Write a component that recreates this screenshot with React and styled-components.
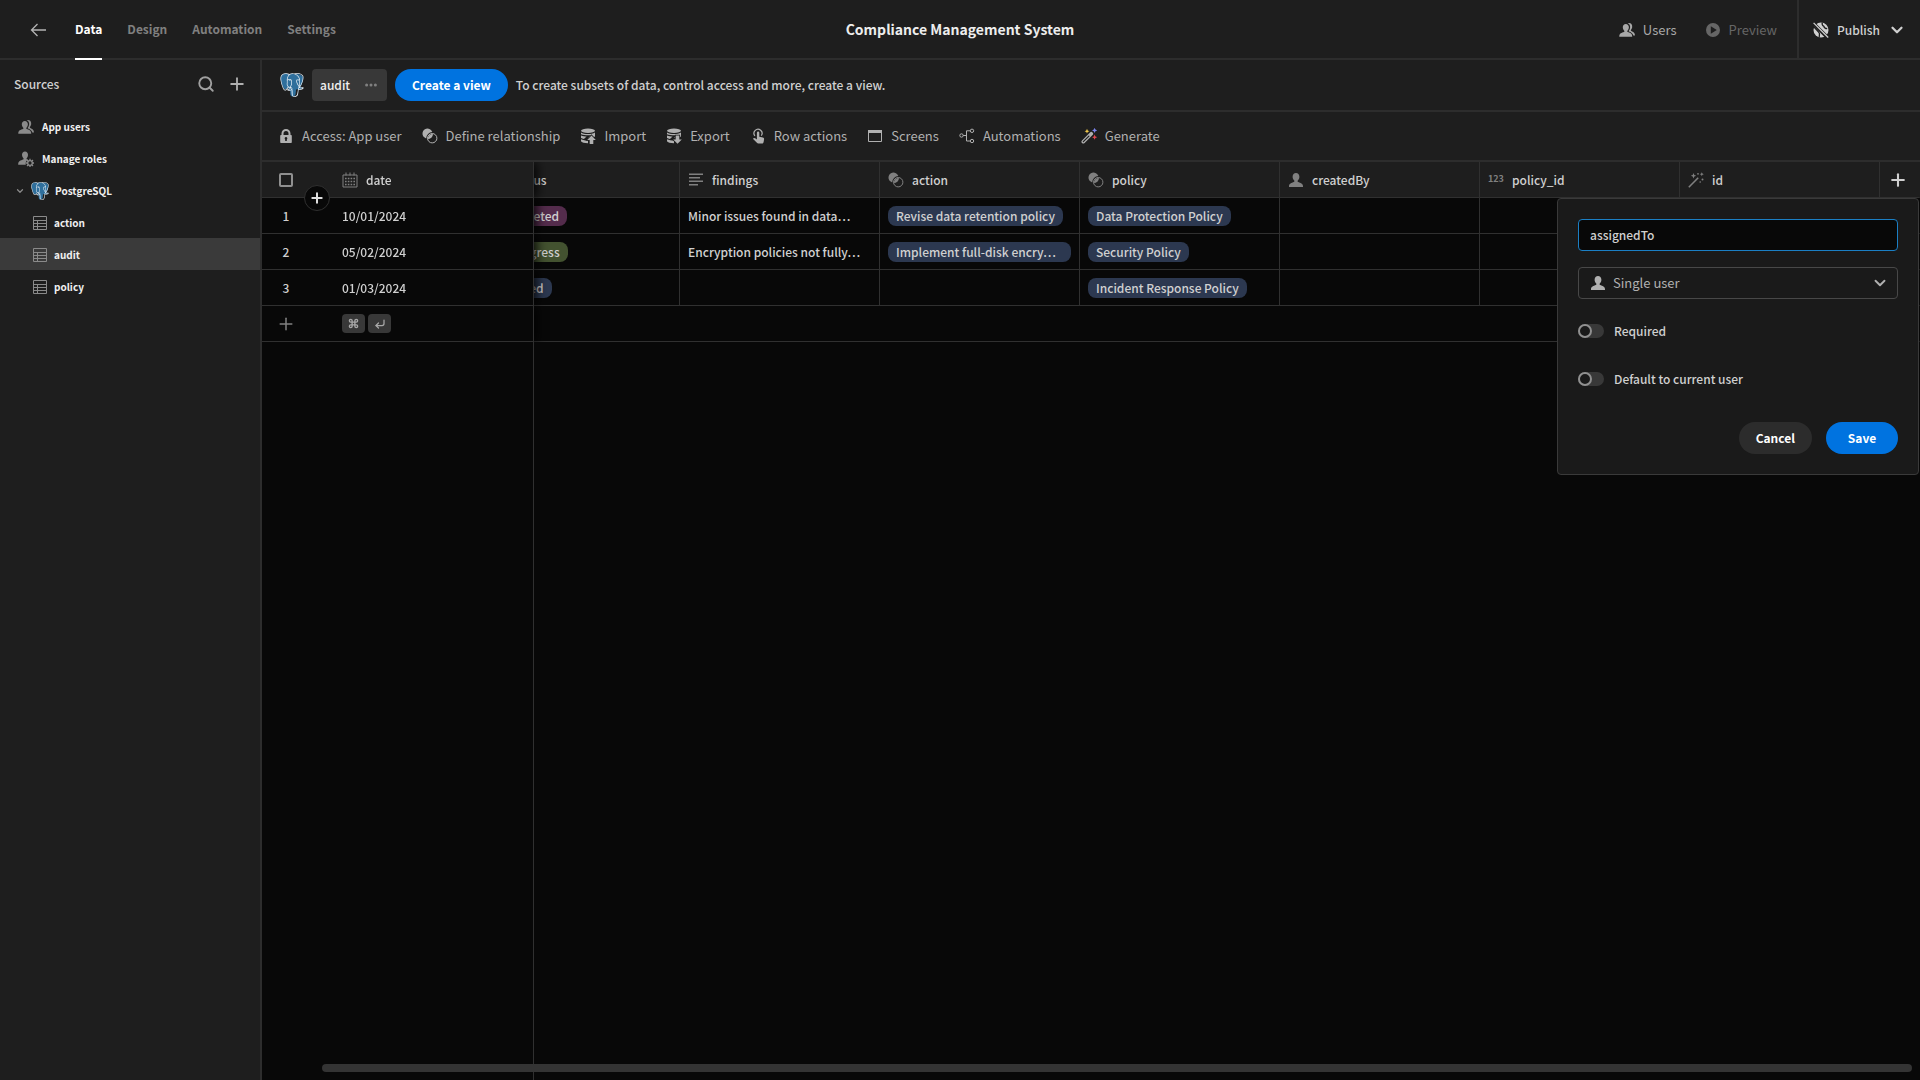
import React, { useLayoutEffect, useRef, useState } from "react";
import styled, { createGlobalStyle } from "styled-components";
import { SiPostgresql } from "react-icons/si";
import {
	ChevronDown,
	Command,
	CornerDownLeft,
	Plus,
	Search
} from "lucide-react";

const GlobalStyle = createGlobalStyle`
	*, *::before {
		box-sizing: border-box;
	}
	body {
		margin: 0;
		background: #080808;
		color: #d0d0d0;
		font-family: "Noto Sans CJK SC", "Noto Sans", sans-serif;
		font-size: 12px;
		line-height: 20px;
		overflow: hidden;
	}
	button, input, select {
		font: inherit;
		color: inherit;
	}
	button {
		background: none;
		border: none;
		padding: 0;
		cursor: pointer;
	}
	svg {
		flex: none;
		display: block;
	}
`;

const SCApp = styled.div`
	display: flex;
	flex-direction: column;
	height: 100vh;
`;

const SCTopBar = styled.header`
	display: grid;
	grid-template-columns: 1fr auto 1fr;
	height: 60px;
	background: #1e1e1e;
	border-bottom: 2px solid #2d2d2d;
`;

const SCTabs = styled.nav`
	display: flex;
	align-items: stretch;
	gap: 25px;
	padding-left: 30px;
`;

const SCBack = styled.button`
	margin-right: 3px;
	color: #b4b4b4;
`;

const SCTab = styled.a`
	display: flex;
	align-items: center;
	height: 60px;
	color: ${props => (props.$active ? "#ffffff" : "#808080")};
	border-bottom: 2px solid
		${props => (props.$active ? "#ffffff" : "transparent")};
	font-weight: 700;
	text-decoration: none;
`;

const SCTitle = styled.h1`
	margin: 0;
	padding-bottom: 2px;
	align-self: center;
	color: #ededed;
	font-size: 14px;
	font-weight: 700;
`;

const SCTopActions = styled.div`
	display: flex;
	justify-content: flex-end;
`;

const SCTopButton = styled.button`
	display: flex;
	align-items: center;
	gap: 8px;
	margin-right: 28px;
	color: #a8a8a8;
	font-size: 13px;

	&:disabled {
		margin-right: 20px;
		color: #666666;
	}
`;

const SCPublish = styled.button`
	display: flex;
	align-items: center;
	gap: 8px;
	padding: 0 14px;
	border-left: 2px solid #2d2d2d;
	color: #d0d0d0;
	font-weight: 500;
`;

const SCBody = styled.div`
	display: flex;
	flex: 1;
	min-height: 0;
`;

const SCSidebar = styled.aside`
	width: 262px;
	flex: none;
	background: #1e1e1e;
	border-right: 2px solid #2d2d2d;
`;

const SCSidebarHeader = styled.div`
	display: flex;
	align-items: center;
	gap: 12px;
	height: 50px;
	padding: 0 13px 2px 14px;
	color: #d0d0d0;
`;

const SCSidebarTitle = styled.h2`
	flex: 1;
	margin: 0;
	font-size: 12px;
	font-weight: 500;
`;

const SCSourceList = styled.ul`
	margin: 0;
	padding: 0;
	list-style: none;
`;

const SCSource = styled.a`
	display: flex;
	align-items: center;
	gap: ${props => (props.$nested ? 6 : 8)}px;
	height: 32px;
	padding-top: 1px;
	padding-left: ${props => props.$indent}px;
	background: ${props => (props.$active ? "#3a3a3a" : "transparent")};
	color: #f0f0f0;
	font-size: 10px;
	font-weight: 700;
	text-decoration: none;

	svg {
		color: #8a8a8a;
	}
`;

const SCMain = styled.main`
	display: flex;
	flex-direction: column;
	flex: 1;
	min-width: 0;
`;

const SCViewBar = styled.div`
	display: flex;
	align-items: center;
	gap: 8px;
	height: 52px;
	padding-left: 18px;
	background: #1e1e1e;
	border-bottom: 2px solid #2d2d2d;
	font-weight: 500;
`;

const SCViewPill = styled.button`
	display: flex;
	align-items: center;
	justify-content: space-between;
	width: 75px;
	height: 32px;
	padding: 0 10px 0 8px;
	border-radius: 4px;
	background: #383838;
	color: #f0f0f0;
	font-weight: 500;
`;

const SCButton = styled.button`
	min-width: 72px;
	height: 32px;
	padding: 0 17px;
	border-radius: 16px;
	background: ${props => (props.$primary ? "#0073e0" : "#2c2c2c")};
	color: #ffffff;
	font-weight: 700;
`;

const SCToolbar = styled.div`
	display: flex;
	align-items: center;
	gap: 20px;
	height: 50px;
	padding-left: 16px;
	background: #1e1e1e;
	border-bottom: 2px solid #2d2d2d;
`;

const SCTool = styled.button`
	display: flex;
	align-items: center;
	gap: 8px;
	color: #b0b0b0;
	font-size: 13px;
`;

const SCGrid = styled.div`
	position: relative;
	flex: 1;
	min-height: 0;
`;

const SCScroller = styled.div`
	display: flex;
	flex-direction: column;
	height: 100%;
	overflow-x: auto;
	overflow-y: hidden;
	scrollbar-width: none;
`;

const SCTable = styled.table`
	flex: none;
	width: 1712px;
	min-width: calc(100% + 54px);
	table-layout: fixed;
	border-collapse: separate;
	border-spacing: 0;
	text-align: left;
`;

const SCHead = styled.th`
	height: 36px;
	padding: 0 8px;
	background: #1e1e1e;
	border-right: 1px solid ${props => (props.$plain ? "transparent" : "#303030")};
	border-bottom: 1px solid #303030;
	color: #d0d0d0;
	font-weight: 500;
`;

const SCHeadInner = styled.div`
	display: flex;
	align-items: center;
	gap: 8px;

	svg {
		color: #808080;
	}
`;

const SCAddColumn = styled.button`
	display: flex;
`;

const SCCell = styled.td`
	height: 36px;
	padding: 0 8px;
	background: #080808;
	border-right: 1px solid ${props => (props.$plain ? "transparent" : "#303030")};
	border-bottom: 1px solid #303030;
	font-weight: 500;
	white-space: nowrap;
	overflow: hidden;
`;

const SCGutterHead = styled(SCHead)`
	position: sticky;
	left: 0;
	z-index: 3;
	padding: 0;
	border-right: none;
`;

const SCGutterCell = styled(SCCell)`
	position: sticky;
	left: 0;
	z-index: 1;
	padding: 0;
	border-right: none;
`;

const SCGutterInner = styled.div`
	display: flex;
	justify-content: center;
	width: 48px;
	color: #d0d0d0;
`;

const SCPinnedHead = styled(SCHead)`
	position: sticky;
	left: 72px;
	z-index: 2;
	border-right-color: #303030;
	box-shadow: 2px 0 12px #000000;
	clip-path: inset(0 -20px 0 0);
`;

const SCPinnedCell = styled(SCCell)`
	position: sticky;
	left: 72px;
	z-index: 1;
	overflow: visible;
	border-right-color: #303030;
	box-shadow: 2px 0 12px #000000;
	clip-path: inset(0 -20px 0 0);
`;

const SCPinnedRest = styled.div`
	position: sticky;
	left: 0;
	flex: 1;
	width: 272px;
	border-right: 1px solid #303030;
`;

const SCCheckbox = styled.input`
	appearance: none;
	width: 14px;
	height: 14px;
	margin: 0;
	border: 2px solid #909090;
	border-radius: 2px;
`;

const SCInsertRow = styled.button`
	position: absolute;
	right: 4px;
	bottom: -14px;
	display: flex;
	align-items: center;
	justify-content: center;
	width: 26px;
	height: 26px;
	border: 1px solid #303030;
	border-radius: 50%;
	background: #080808;
	color: #e0e0e0;
`;

const SCBadge = styled.span`
	display: block;
	width: ${props => (props.$fill ? "100%" : "fit-content")};
	height: 20px;
	padding: 0 8px;
	border-radius: 8px;
	background: ${props => props.$color};
`;

const SCKeys = styled.div`
	display: flex;
	gap: 3px;
`;

const SCKey = styled.kbd`
	display: flex;
	align-items: center;
	justify-content: center;
	width: 23px;
	height: 19px;
	border-radius: 4px;
	background: #383838;
	color: #a8a8a8;
`;

const SCScrollThumb = styled.div`
	position: absolute;
	left: 60px;
	right: 8px;
	bottom: 8px;
	z-index: 4;
	height: 8px;
	border-radius: 4px;
	background: #343434;
`;

const SCPopover = styled.form`
	position: absolute;
	top: 36px;
	right: 1px;
	z-index: 5;
	display: flex;
	flex-direction: column;
	gap: 16px;
	width: 362px;
	padding: 20px;
	border: 1px solid #3a3a3a;
	border-radius: 4px;
	background: #1a1a1a;
	font-weight: 500;
`;

const SCInput = styled.input`
	height: 32px;
	padding: 0 11px 2px;
	border: 1px solid #1b7fc4;
	border-radius: 4px;
	outline: none;
	background: #080808;
	color: #d0d0d0;
`;

const SCSelectBox = styled.label`
	display: flex;
	align-items: center;
	gap: 7px;
	height: 32px;
	padding: 0 8px 0 11px;
	border: 1px solid #484848;
	border-radius: 4px;
	color: #b0b0b0;
	font-size: 13px;
	font-weight: 400;
`;

const SCSelect = styled.select`
	appearance: none;
	flex: 1;
	padding: 0;
	border: none;
	outline: none;
	background: transparent;
`;

const SCToggleRow = styled.label`
	display: flex;
	align-items: center;
	gap: 10px;
	height: 32px;
`;

const SCToggle = styled.input`
	appearance: none;
	width: 26px;
	height: 14px;
	margin: 0;
	border-radius: 7px;
	background: #383838;

	&::before {
		content: "";
		display: block;
		width: 14px;
		height: 14px;
		border: 2px solid #909090;
		border-radius: 50%;
		background: #1a1a1a;
	}

	&:checked::before {
		margin-left: 12px;
	}
`;

const SCFooter = styled.div`
	display: flex;
	justify-content: flex-end;
	gap: 14px;
	padding-top: 11px;
`;

const Icon = ({ children, size = 16 }) => (
	<svg width={size} height={size} viewBox="0 0 16 16" fill="currentColor">
		{children}
	</svg>
);

const PERSON =
	"M8 1c-2 0-3.4 1.6-3.4 3.8 0 1.7.8 3 1.6 3.8.3.4.3 1.2-.3 1.5C3.5 11 1 11.8 1 14.3v.7h14v-.7c0-2.5-2.5-3.3-4.9-4.2-.6-.3-.6-1.1-.3-1.5.8-.8 1.6-2.1 1.6-3.8C11.4 2.6 10 1 8 1z";

const BackIcon = () => (
	<svg width="17" height="14" viewBox="0 0 17 14" fill="none" stroke="currentColor" strokeWidth="1.3">
		<path d="M16 7H1.5M7.5 1l-6 6 6 6" />
	</svg>
);

const UserIcon = () => (
	<Icon>
		<path d={PERSON} />
	</Icon>
);

const UsersIcon = () => (
	<Icon>
		<path d="M6.8 2C5 2 3.8 3.4 3.8 5.3c0 1.5.7 2.7 1.4 3.4.3.4.3 1-.2 1.3C2.7 10.8.3 11.5.3 14v.8h12.9V14c0-2.5-2.3-3.2-4.5-4-.5-.3-.5-.9-.2-1.3.7-.7 1.4-1.9 1.4-3.4C9.9 3.4 8.6 2 6.8 2z" />
		<path d="M8.7 1c2.9-.6 4.8 1.1 4.5 4-.1 1.2-.6 2.2-1.2 2.8-.3.4-.2.9.3 1.2 1.9.8 3.7 2 3.7 4.4h-1.7c-.6-2.3-2.5-3.1-4.4-3.9-.3-.3-.2-.6 0-.9 1.9-2.4 1.8-6-1.2-7.6z" />
	</Icon>
);

const RolesIcon = () => (
	<Icon>
		<path d="M7 .5C5.2.5 4 1.9 4 3.8c0 1.5.7 2.7 1.4 3.4.3.4.3 1.1-.2 1.4C2.7 9.5.2 10.4.2 13v.8h7.6a5 5 0 0 1 2.3-5.3l-1.4-.3c-.3-.3-.2-.7 0-1C9.5 6.4 10 5.2 10 3.8 10 1.9 8.8.5 7 .5z" />
		<circle cx="12" cy="12" r="2.3" fill="none" stroke="currentColor" strokeWidth="1.3" />
		<path d="M12 7.8v1.9M12 14.3v1.9M7.8 12h1.9M14.3 12h1.9M9 9l1.4 1.4M13.6 13.6L15 15M15 9l-1.4 1.4M10.4 13.6L9 15" stroke="currentColor" strokeWidth="1.3" />
	</Icon>
);

const TableIcon = () => (
	<Icon>
		<path d="M1.5 1.5h13v13h-13zM1.5 5.5h13M1.5 8.5h13M1.5 11.5h13M5.5 5.5v9" fill="none" stroke="currentColor" />
	</Icon>
);

const LockIcon = () => (
	<Icon>
		<path fillRule="evenodd" d="M3 7h.5V5.5a4.5 4.5 0 0 1 9 0V7h.5a.8.8 0 0 1 .8.8v6.4a.8.8 0 0 1-.8.8H3a.8.8 0 0 1-.8-.8V7.8A.8.8 0 0 1 3 7zm2.500 0h5V5.500a2.500 2.500 0 0 0-5 0zM8 9a1.400 1.400 0 0 0-.8 2.500V13h1.600v-1.500A1.400 1.400 0 0 0 8 9z" />
	</Icon>
);

const RelationIcon = () => (
	<Icon>
		<path d="M10.3 4.1A5 5 0 1 0 4.2 10.4 6.5 6.5 0 0 1 10.3 4.1z" />
		<circle cx="10.2" cy="10.2" r="4.7" fill="none" stroke="currentColor" />
		<path d="M11 5.7A5.3 5.3 0 0 1 5.8 11 5.3 5.3 0 0 1 11 5.7z" />
	</Icon>
);

const DatabaseIcon = ({ up }) => (
	<Icon>
		<ellipse cx="8" cy="2.7" rx="7" ry="2.2" />
		<path d="M1 4.6c1.8 1.2 4.3 1.5 7 1.5s5.2-.3 7-1.5v3.8C13.2 9.5 10.7 9.8 8 9.8l3-2.6C7.5 7.5 3.5 7.2 1 6.3z" />
		<path d="M1 7.6c2 .9 3.8 1 5.6 1L3.9 10.9C2.7 10.7 1.7 10.4 1 9.9z" />
		<path d="M1 11.3c2 1 4.500 1.200 7 1.200v2.700c-3.600 0-6.400-.7-7-2z" />
		<g stroke="#1e1e1e" strokeWidth="1.6" paintOrder="stroke">
			{up ? (
				<path d="M11.500 7.500L15.800 12h-2.500v4H9.700v-4H7.200z" />
			) : (
				<path d="M9.700 7.500h3.600v4h2.500l-4.300 4.300-4.300-4.300h2.500z" />
			)}
		</g>
	</Icon>
);

const TapIcon = () => (
	<Icon>
		<path d="M4.9 7.8A4 4 0 1 1 11.3 7.6" fill="none" stroke="currentColor" strokeWidth="1.2" />
		<path d="M6.9 4.8a1.2 1.2 0 0 1 2.4 0v4l3.6.8c.9.2 1.3.8 1.2 1.7l-.5 2.7c-.1.8-.6 1.5-1.5 1.5H8.3c-.6 0-1-.2-1.4-.7L2.9 10.7c.7-1 1.9-.9 2.7-.2l1.3 1z" />
	</Icon>
);

const ScreenIcon = () => (
	<Icon>
		<path d="M1.5 2.5h13v11h-13z" fill="none" stroke="currentColor" />
		<path d="M1 2h14v3H1z" />
	</Icon>
);

const WorkflowIcon = () => (
	<Icon>
		<g fill="none" stroke="currentColor">
			<circle cx="2.5" cy="7.5" r="1.7" />
			<circle cx="13" cy="2.8" r="1.7" />
			<circle cx="13" cy="13" r="1.7" />
			<path d="M4.2 7.5h3M11.3 2.8H7.5v10.2h3.800" />
		</g>
	</Icon>
);

const ColorWandIcon = () => (
	<Icon>
		<path d="M2.3 13.7l8-8" stroke="currentColor" strokeWidth="3.6" strokeLinecap="round" />
		<path d="M2.3 13.7l5.6-5.6" stroke="#1e1e1e" strokeWidth="1.2" strokeLinecap="round" />
		<path fill="#f2c94c" d="M6 .8l.7 1.7 1.7.7-1.7.7L6 5.6l-.7-1.7-1.7-.7 1.700-.7z" />
		<path fill="#7b83eb" d="M13.6-.2l.8 1.8 1.8.8-1.8.8-.8 1.8-.8-1.8-1.8-.8 1.8-.8z" />
		<path fill="#e34850" d="M13.6 6.6l.8 1.8 1.8.8-1.8.8-.8 1.8-.8-1.8-1.8-.8 1.8-.8z" />
	</Icon>
);

const WandIcon = () => (
	<Icon>
		<path d="M.8 15.2L10.2 5.8" stroke="currentColor" strokeWidth="1.6" />
		<path d="M5.5 1l.8 1.9 1.9.8-1.9.8-.8 1.9-.8-1.9-1.9-.8 1.9-.8z" />
		<path d="M13.8.2l.6 1.4 1.4.6-1.4.6-.6 1.4-.6-1.4-1.4-.6 1.4-.6z" />
		<circle cx="10" cy="1.8" r=".9" />
		<circle cx="14.5" cy="7.5" r="1" />
		<circle cx="12.2" cy="10" r=".8" />
	</Icon>
);

const CalendarIcon = () => (
	<Icon>
		<path d="M1 3h14v12H1zM4 .5v3M8 .5v3M12 .5v3" fill="none" stroke="currentColor" />
		<path d="M3 6.5h10M3 9.5h10M3 12.5h10" stroke="currentColor" strokeWidth="1.6" strokeDasharray="1.6 1.2" />
	</Icon>
);

const TextIcon = () => (
	<Icon>
		<path d="M1 1.5h14v1.5H1zM1 5h11v1.5H1zM1 8.5h14V10H1zM1 12h9v1.5H1z" />
	</Icon>
);

const NumbersIcon = () => (
	<Icon>
		<text x="0" y="10" fontSize="9" fontWeight="700">
			123
		</text>
	</Icon>
);

const PlayIcon = () => (
	<Icon>
		<path fillRule="evenodd" d="M8 1a7 7 0 1 0 0 14A7 7 0 0 0 8 1zM5.800 4.300L11.800 8l-6 3.700z" />
	</Icon>
);

const GlobeStrikeIcon = () => (
	<Icon>
		<circle cx="8" cy="8" r="7.5" />
		<path d="M9.2.6c-.3 2 .2 3.2 1.7 3.7.3 1.6 1.5 2.3 3.3 2.4M1 5c1.5 2.2 4.5 4 5.4 6.2.3 1.3-.2 2.700-.2 4.200" fill="none" stroke="#1e1e1e" strokeWidth="1.3" />
		<path d="M0 1l15 15" stroke="#1e1e1e" strokeWidth="3.6" />
		<path d="M.6.9l14.6 14.6" stroke="currentColor" strokeWidth="1.3" />
	</Icon>
);

const DotsIcon = () => (
	<svg width="12" height="4" viewBox="0 0 12 4" fill="#808080">
		<circle cx="1.6" cy="2" r="1.5" />
		<circle cx="6" cy="2" r="1.5" />
		<circle cx="10.4" cy="2" r="1.5" />
	</svg>
);

const PostgresIcon = ({ size }) => (
	<svg width={size} height={size} viewBox="0 0 24 24">
		<path
			fill="#2f6f9c"
			d="M6 .8C2.5.5.5 2.6.8 6.5c.4 3 1.5 6.5 3 8.8 1 1.3 2.2 1 3.2-.1l1.7.2-.4 1.5 1.7.6.4 4c.4 1.8 1.6 2.2 3.2 1.7 1.8-.5 2-1.6 2.1-3.3l.4-3.5 4.7-.3 2-1.5-2.5-.3c2-3.2 3.4-8.5 2.4-10.8C20.5.8 17.5.5 14.8 1.2 12 .5 9.5.7 8.5 1.3z"
		/>
		<SiPostgresql size={24} color="#e4edf4" />
	</svg>
);

const TABS = ["Data", "Design", "Automation", "Settings"];

const SOURCES = [
	{ label: "App users", icon: <UsersIcon />, indent: 18 },
	{ label: "Manage roles", icon: <RolesIcon />, indent: 18 },
	{
		label: "PostgreSQL",
		icon: <PostgresIcon size={18} />,
		indent: 15,
		nested: true,
		open: true
	},
	{ label: "action", icon: <TableIcon />, indent: 32, nested: true },
	{ label: "audit", icon: <TableIcon />, indent: 32, nested: true },
	{ label: "policy", icon: <TableIcon />, indent: 32, nested: true }
];

const TOOLS = [
	{ label: "Access: App user", icon: <LockIcon /> },
	{ label: "Define relationship", icon: <RelationIcon /> },
	{ label: "Import", icon: <DatabaseIcon up /> },
	{ label: "Export", icon: <DatabaseIcon /> },
	{ label: "Row actions", icon: <TapIcon /> },
	{ label: "Screens", icon: <ScreenIcon /> },
	{ label: "Automations", icon: <WorkflowIcon /> },
	{ label: "Generate", icon: <ColorWandIcon /> }
];

const COLUMNS = [
	{ name: "status", icon: <TextIcon /> },
	{ name: "findings", icon: <TextIcon /> },
	{ name: "action", icon: <RelationIcon /> },
	{ name: "policy", icon: <RelationIcon /> },
	{ name: "createdBy", icon: <UserIcon /> },
	{ name: "policy_id", icon: <NumbersIcon /> },
	{ name: "id", icon: <WandIcon /> }
];

const BLUE = "#2c3850";

const ROWS = [
	{
		date: "10/01/2024",
		status: "Completed",
		color: "#542c4c",
		findings: "Minor issues found in data…",
		action: "Revise data retention policy",
		policy: "Data Protection Policy"
	},
	{
		date: "05/02/2024",
		status: "In progress",
		color: "#435230",
		findings: "Encryption policies not fully…",
		action: "Implement full-disk encry…",
		policy: "Security Policy"
	},
	{
		date: "01/03/2024",
		status: "Planned",
		color: BLUE,
		policy: "Incident Response Policy"
	}
];

function TopBar() {
	return (
		<SCTopBar>
			<SCTabs>
				<SCBack aria-label="Back">
					<BackIcon />
				</SCBack>
				{TABS.map(tab => (
					<SCTab key={tab} href="#" $active={tab === "Data"}>
						{tab}
					</SCTab>
				))}
			</SCTabs>
			<SCTitle>Compliance Management System</SCTitle>
			<SCTopActions>
				<SCTopButton>
					<UsersIcon />
					Users
				</SCTopButton>
				<SCTopButton disabled>
					<PlayIcon />
					Preview
				</SCTopButton>
				<SCPublish>
					<GlobeStrikeIcon />
					Publish
					<ChevronDown size={18} strokeWidth={3} />
				</SCPublish>
			</SCTopActions>
		</SCTopBar>
	);
}

function Sidebar() {
	return (
		<SCSidebar>
			<SCSidebarHeader>
				<SCSidebarTitle>Sources</SCSidebarTitle>
				<button aria-label="Search">
					<Search size={18} strokeWidth={2.5} color="#a0a0a0" />
				</button>
				<button aria-label="Add source">
					<Plus size={20} strokeWidth={2.2} color="#b0b0b0" />
				</button>
			</SCSidebarHeader>
			<SCSourceList>
				{SOURCES.map(source => (
					<li key={source.label}>
						<SCSource
							href="#"
							$indent={source.indent}
							$nested={source.nested}
							$active={source.label === "audit"}
						>
							{source.open && <ChevronDown size={10} strokeWidth={3} />}
							{source.icon}
							{source.label}
						</SCSource>
					</li>
				))}
			</SCSourceList>
		</SCSidebar>
	);
}

function ColumnPopover() {
	const [name, setName] = useState("assignedTo");

	return (
		<SCPopover onSubmit={event => event.preventDefault()}>
			<SCInput
				aria-label="Column name"
				value={name}
				onChange={event => setName(event.target.value)}
			/>
			<SCSelectBox>
				<UserIcon />
				<SCSelect aria-label="Column type" defaultValue="user">
					<option value="user">Single user</option>
				</SCSelect>
				<ChevronDown size={18} strokeWidth={2.5} />
			</SCSelectBox>
			<SCToggleRow>
				<SCToggle type="checkbox" name="required" />
				Required
			</SCToggleRow>
			<SCToggleRow>
				<SCToggle type="checkbox" name="defaultUser" />
				Default to current user
			</SCToggleRow>
			<SCFooter>
				<SCButton type="button">Cancel</SCButton>
				<SCButton type="submit" $primary>
					Save
				</SCButton>
			</SCFooter>
		</SCPopover>
	);
}

function Grid() {
	const scroller = useRef(null);

	useLayoutEffect(() => {
		scroller.current.scrollLeft = 54;
	}, []);

	return (
		<SCGrid>
			<SCScroller ref={scroller}>
				<SCTable>
					<colgroup>
						<col width="72" />
						<col width="200" />
						{COLUMNS.map(column => (
							<col key={column.name} width="200" />
						))}
						<col />
					</colgroup>
					<thead>
						<tr>
							<SCGutterHead>
								<SCGutterInner>
									<SCCheckbox type="checkbox" aria-label="Select all rows" />
								</SCGutterInner>
								<SCInsertRow aria-label="Insert row">
									<Plus size={16} strokeWidth={3} />
								</SCInsertRow>
							</SCGutterHead>
							<SCPinnedHead>
								<SCHeadInner>
									<CalendarIcon />
									date
								</SCHeadInner>
							</SCPinnedHead>
							{COLUMNS.map(column => (
								<SCHead key={column.name}>
									<SCHeadInner>
										{column.icon}
										{column.name}
									</SCHeadInner>
								</SCHead>
							))}
							<SCHead $plain>
								<SCAddColumn aria-label="Add column">
									<Plus size={20} strokeWidth={2.5} />
								</SCAddColumn>
							</SCHead>
						</tr>
					</thead>
					<tbody>
						{ROWS.map((row, index) => (
							<tr key={row.date}>
								<SCGutterCell>
									<SCGutterInner>{index + 1}</SCGutterInner>
								</SCGutterCell>
								<SCPinnedCell>{row.date}</SCPinnedCell>
								<SCCell>
									<SCBadge $color={row.color}>{row.status}</SCBadge>
								</SCCell>
								<SCCell>{row.findings}</SCCell>
								<SCCell>
									{row.action && (
										<SCBadge $color={BLUE} $fill={row.action.endsWith("…")}>
											{row.action}
										</SCBadge>
									)}
								</SCCell>
								<SCCell>
									<SCBadge $color={BLUE}>{row.policy}</SCBadge>
								</SCCell>
								<SCCell />
								<SCCell />
								<SCCell />
								<SCCell $plain />
							</tr>
						))}
						<tr>
							<SCGutterCell>
								<SCGutterInner>
									<Plus size={20} strokeWidth={1.8} color="#808080" />
								</SCGutterInner>
							</SCGutterCell>
							<SCPinnedCell>
								<SCKeys>
									<SCKey>
										<Command size={11} strokeWidth={3} />
									</SCKey>
									<SCKey>
										<CornerDownLeft size={12} strokeWidth={2.5} />
									</SCKey>
								</SCKeys>
							</SCPinnedCell>
							<SCCell colSpan={8} $plain />
						</tr>
					</tbody>
				</SCTable>
				<SCPinnedRest />
			</SCScroller>
			<SCScrollThumb />
			<ColumnPopover />
		</SCGrid>
	);
}

function App() {
	return (
		<SCApp>
			<GlobalStyle />
			<TopBar />
			<SCBody>
				<Sidebar />
				<SCMain>
					<SCViewBar>
						<PostgresIcon size={24} />
						<SCViewPill>
							audit
							<DotsIcon />
						</SCViewPill>
						<SCButton $primary>Create a view</SCButton>
						<span>
							To create subsets of data, control access and more, create a
							view.
						</span>
					</SCViewBar>
					<SCToolbar>
						{TOOLS.map(tool => (
							<SCTool key={tool.label}>
								{tool.icon}
								{tool.label}
							</SCTool>
						))}
					</SCToolbar>
					<Grid />
				</SCMain>
			</SCBody>
		</SCApp>
	);
}

export default App;
